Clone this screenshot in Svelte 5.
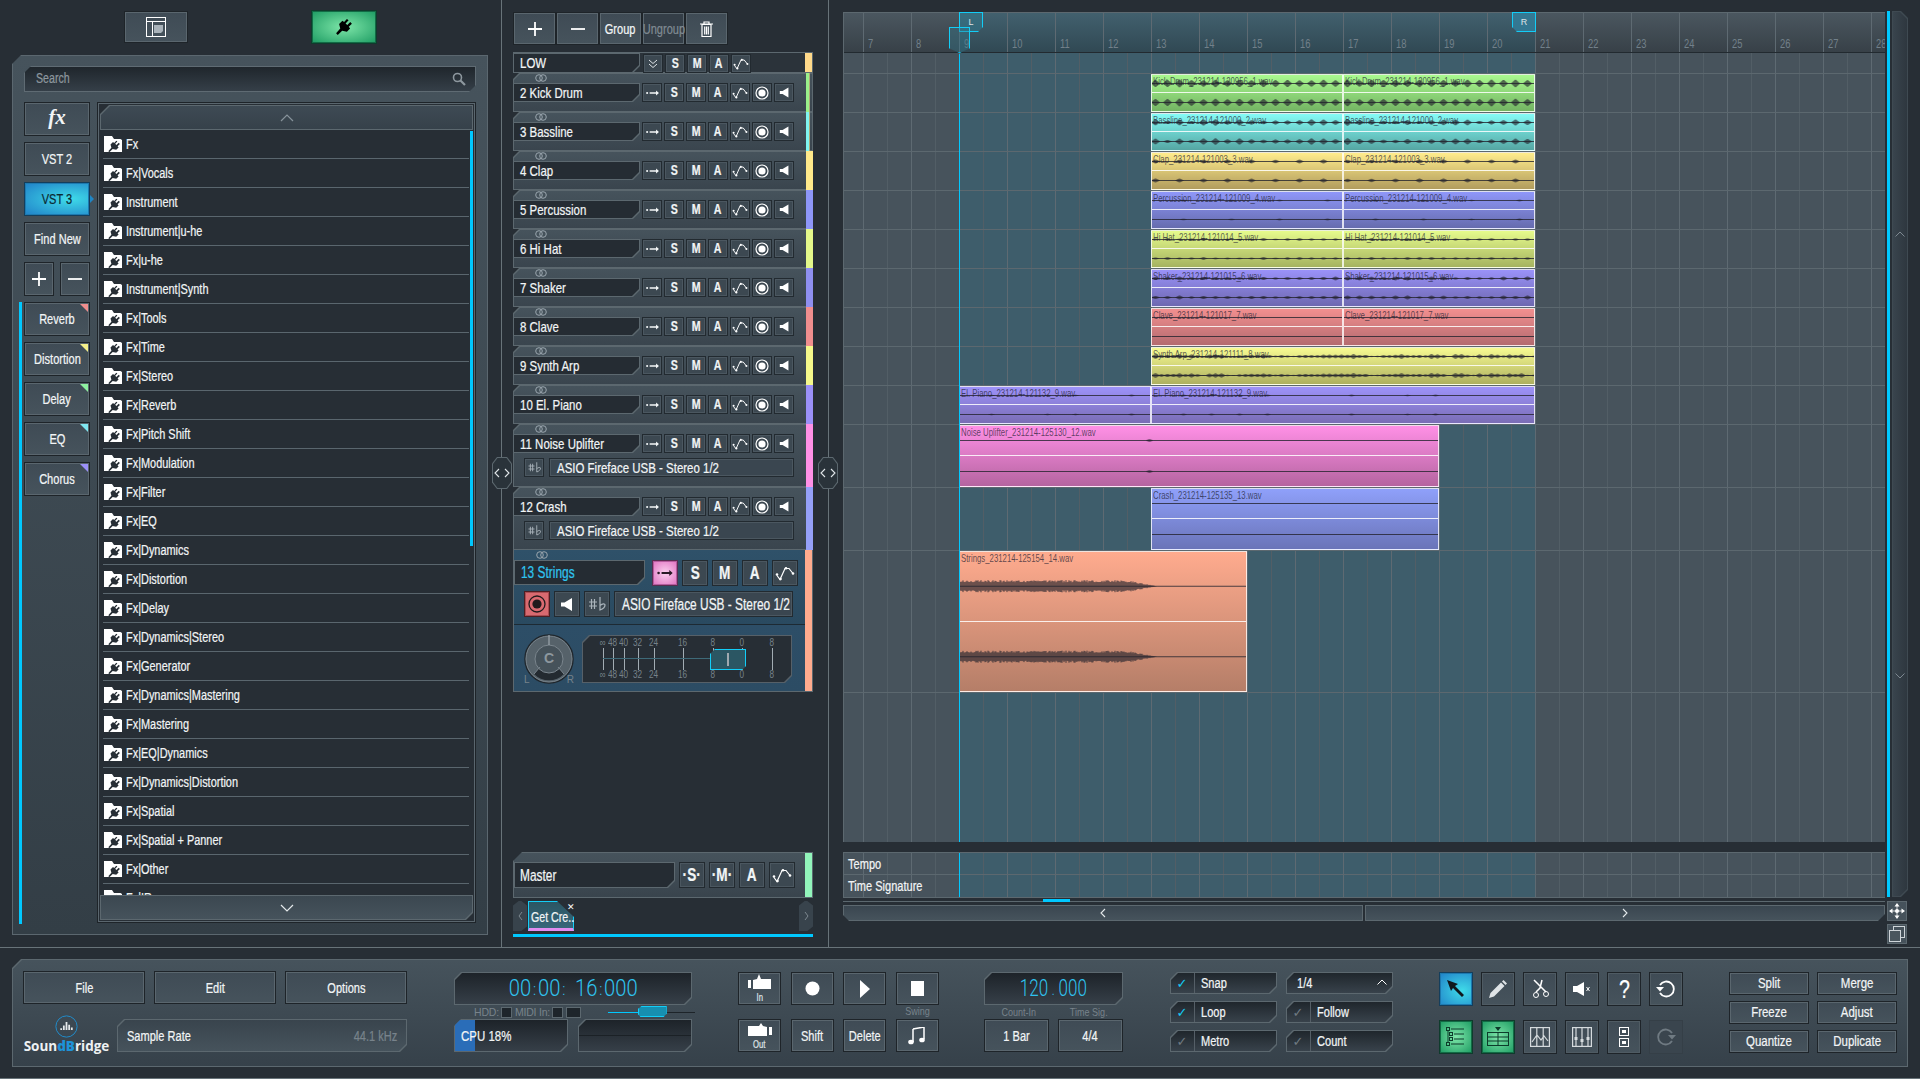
<script>
  const folders = ['Fx','Fx|Vocals','Instrument','Instrument|u-he','Fx|u-he','Instrument|Synth','Fx|Tools','Fx|Time','Fx|Stereo','Fx|Reverb','Fx|Pitch Shift','Fx|Modulation','Fx|Filter','Fx|EQ','Fx|Dynamics','Fx|Distortion','Fx|Delay','Fx|Dynamics|Stereo','Fx|Generator','Fx|Dynamics|Mastering','Fx|Mastering','Fx|EQ|Dynamics','Fx|Dynamics|Distortion','Fx|Spatial','Fx|Spatial + Panner','Fx|Other','Fx|IR'];
  const fxTabs = [['Reverb','#f08e8e'],['Distortion','#f5f08a'],['Delay','#8ef0a0'],['EQ','#7fe6f0'],['Chorus','#9b90f8']];
  const tracks = [
    {n:'2 Kick Drum',c:'#9af08a',g:1},{n:'3 Bassline',c:'#7ff5f0',g:1},{n:'4 Clap',c:'#ffe98a'},{n:'5 Percussion',c:'#8e96f8'},
    {n:'6 Hi Hat',c:'#e4f88a'},{n:'7 Shaker',c:'#8f8ff0'},{n:'8 Clave',c:'#f08e8e'},{n:'9 Synth Arp',c:'#f5f88a'},{n:'10 El. Piano',c:'#9b90f8'},
    {n:'11 Noise Uplifter',c:'#ff90e6',out:1},{n:'12 Crash',c:'#95a0f8',out:1}
  ];
  const barX = (b) => (b - 13) * 48 + 307;
  const bars = Array.from({length:22},(_,i)=>i+7);

  function rnd(seed){ let s = seed; return () => { s = (s * 16807) % 2147483647; return s / 2147483647; }; }
  function wave(w, h, spec, seed, lane){
    const r = rnd(seed * 97 + 13);
    const mid = lane === 0 ? h * 0.25 : h * 0.75;
    let d = `M0 ${mid}H${w}`;
    const {p, a, j, env, o = 4} = spec;
    if (env){
      for (let x=0;x<env;x+=1){
        const t = x/env; const am = a*(0.7+0.4*r())*(t>0.85?(1-t)*6.6:1);
        d += `M${x} ${(mid-am).toFixed(1)}V${(mid+am).toFixed(1)}`;
      }
      return d;
    }
    if (p){
      for (let x=o;x<w;x+=p){
        if (r() < (spec.skip||0)) continue;
        const base = a*(1-j*r());
        for (let i=-3;i<6;i++){
          const am = base*Math.max(0,1-Math.abs(i-0.5)/4.5);
          if (am<0.3) continue;
          d += `M${x+i} ${(mid-am).toFixed(1)}V${(mid+am).toFixed(1)}`;
        }
      }
    }
    return d;
  }
  const rows = [
    {h:39,clips:[['Kick Drum_231214-120956_1.wav',13,17,'#a9f98f','#73b463',{p:12,a:4.2,j:.2}],['Kick Drum_231214-120956_1.wav',17,21,'#a9f98f','#73b463',{p:12,a:4.2,j:.2}]]},
    {h:39,clips:[['Bassline_231214-121000_2.wav',13,17,'#84fbf6','#55a6a3',{p:12,a:3.6,j:.6}],['Bassline_231214-121000_2.wav',17,21,'#84fbf6','#55a6a3',{p:12,a:3.6,j:.6}]]},
    {h:39,clips:[['Clap_231214-121003_3.wav',13,17,'#ffec8c','#b19c5d',{p:24,a:2.200,j:.2}],['Clap_231214-121003_3.wav',17,21,'#ffec8c','#b19c5d',{p:24,a:2.200,j:.2}]]},
    {h:39,clips:[['Percussion_231214-121009_4.wav',13,17,'#8f97f9','#666cae',{p:48,a:1,j:.2,o:32}],['Percussion_231214-121009_4.wav',17,21,'#8f97f9','#666cae',{p:48,a:1,j:.2,o:32}]]},
    {h:39,clips:[['Hi Hat_231214-121014_5.wav',13,17,'#e6fb8c','#a5b360',{p:12,a:1.500,j:.5}],['Hi Hat_231214-121014_5.wav',17,21,'#e6fb8c','#a5b360',{p:12,a:1.500,j:.5}]]},
    {h:39,clips:[['Shaker_231214-121015_6.wav',13,17,'#9a92f9','#6e68b0',{p:12,a:2.200,j:.5}],['Shaker_231214-121015_6.wav',17,21,'#9a92f9','#6e68b0',{p:12,a:2.200,j:.5}]]},
    {h:39,clips:[['Clave_231214-121017_7.wav',13,17,'#f28f8f','#b46b70',{}],['Clave_231214-121017_7.wav',17,21,'#f28f8f','#b46b70',{}]]},
    {h:39,clips:[['Synth Arp_231214-121111_8.wav',13,21,'#f7fb92','#aeb060',{p:6,a:2.600,j:.8}]]},
    {h:39,clips:[['El. Piano_231214-121132_9.wav',9,13,'#9d92fa','#7a6db5',{p:28,a:1,j:.3,skip:.4}],['El. Piano_231214-121132_9.wav',13,21,'#9d92fa','#7a6db5',{p:28,a:1,j:.3,skip:.4}]]},
    {h:63,clips:[['Noise Uplifter_231214-125130_12.wav',9,19,'#ff90e6','#b564a0',{p:999,a:1.300,j:0,o:190}]]},
    {h:63,clips:[['Crash_231214-125135_13.wav',13,19,'#8fa0fa','#6a74b8',{}]]},
    {h:142,clips:[['Strings_231214-125154_14.wav',9,15,'#ffab8e','#b57e68',{env:198,a:5.500}]]}
  ];
  const meterLabels = [['∞',604],['48',614],['40',625],['32',639],['24',655],['16',684],['8',714],['0',743],['8',773]];
</script>

<svg width="0" height="0" class="defs">
  <symbol id="plug" viewBox="0 0 24 24"><path d="M15.500 2.500l-3.400 3.600-2-1.600-4 4 1.400 5.400-5 5.600 2 2 5.300-5.100 5.700 1.200 3.800-3.900-1.600-1.900 3.800-3.800-2-1.900-3.600 3.600-2-2 3.600-3.700z"/></symbol>
  <symbol id="folder" viewBox="0 0 18 16"><path d="M0 0h8l2 3h6.500l1.500 1v12H0z" fill="#fff"/><path d="M12.300 4.800l-2.100 2.200-1.200-1-2.500 2.500 .9 3.300-3.100 3.400 1.200.9 3.200-3.100 3.500.8 2.400-2.400-1-1.200 2.300-2.300-1.200-1.200-2.300 2.300-1.200-1.200 2.200-2.300z" fill="#272e35"/></symbol>
  <symbol id="route" viewBox="0 0 20 14"><circle cx="2.500" cy="7" r="1.500" fill="currentColor"/><path d="M6 5.800h9V3.500l4 3.500-4 3.500V8.200H6z" fill="currentColor"/></symbol>
  <symbol id="auto" viewBox="0 0 20 14"><path d="M2 9l3 4 5-11 4 0 4 5" fill="none" stroke="#fff" stroke-width="1.200"/><circle cx="2" cy="8" r="1.300" fill="#fff"/><circle cx="5.500" cy="12.500" r="1.300" fill="#fff"/><circle cx="11" cy="1.800" r="1.300" fill="#fff"/><circle cx="18" cy="7" r="1.300" fill="#fff"/></symbol>
  <symbol id="spk" viewBox="0 0 14 14"><path d="M1 5h3.500L12 .5v13L4.500 9H1z" fill="#fff"/></symbol>
  <symbol id="link" viewBox="0 0 12 8"><circle cx="4" cy="4" r="3.300" fill="none" stroke="#9aa6ae"/><circle cx="8" cy="4" r="3.300" fill="none" stroke="#9aa6ae"/></symbol>
  <symbol id="sharp" viewBox="0 0 20 16"><path d="M2 6h8M2 10h8M4.500 3v10M7.500 3v10M13 1v13c3-1 5-3 5-5 0-1.500-2.500-1.500-5 .5" fill="none" stroke="#aab4bb" stroke-width="1.200"/></symbol>
</svg>

{#snippet ic(id, w, h)}
  <svg width={w} height={h} class="icn"><use href={"#"+id}/></svg>
{/snippet}

{#snippet rec()}
  <svg width="14" height="14" viewBox="0 0 14 14"><circle cx="7" cy="7" r="6" fill="none" stroke="#fff" stroke-width="1.200"/><circle cx="7" cy="7" r="3.600" fill="#fff"/></svg>
{/snippet}

{#snippet plus()}
  <svg width="14" height="14" viewBox="0 0 14 14"><path d="M0 7h14M7 0v14" stroke="#fff" stroke-width="1.800"/></svg>
{/snippet}
{#snippet minus()}
  <svg width="14" height="14" viewBox="0 0 14 14"><path d="M0 7h14" stroke="#fff" stroke-width="1.800"/></svg>
{/snippet}

<div class="app">
  <div class="top">
    <section class="browser">
      <div class="toptools">
        <button class="btn btop">
          <svg width="20" height="20" viewBox="0 0 20 20"><rect x=".5" y=".5" width="19" height="19" fill="none" stroke="#fff"/><path d="M.5 4.500h19M6.500 4.500v15" stroke="#fff" fill="none"/><path d="M8 8h9v6l-2 2H8z" fill="#aab3ba"/></svg>
        </button>
        <button class="btn bplug green">
          <svg width="20" height="20" class="plugi"><use href="#plug"/></svg>
        </button>
      </div>
      <div class="panel">
        <div class="search"><span class="o ol">Search</span>
          <svg width="14" height="14" viewBox="0 0 14 14"><circle cx="5.500" cy="5.500" r="4" fill="none" stroke="#8d979e" stroke-width="1.600"/><path d="M8.500 8.500l4.500 4.500" stroke="#8d979e" stroke-width="2.200"/></svg>
        </div>
        <div class="pbody">
          <div class="pleft">
            <button class="btn lb fxb">fx</button>
            <button class="btn lb"><span class="o">VST 2</span></button>
            <button class="btn lb blue"><span class="o">VST 3</span><i class="tip"></i></button>
            <button class="btn lb"><span class="o">Find New</span></button>
            <div class="pm">
              <button class="btn lb">{@render plus()}</button>
              <button class="btn lb">{@render minus()}</button>
            </div>
            <div class="fxtabs">
              {#each fxTabs as t}
                <button class="btn lb"><span class="o">{t[0]}</span><i class="tri" style="border-top-color:{t[1]}"></i></button>
              {/each}
            </div>
          </div>
          <div class="list">
            <div class="lhead cut-tl"><svg width="14" height="8" viewBox="0 0 14 8"><path d="M1 7l6-6 6 6" fill="none" stroke="#86929a" stroke-width="1.200"/></svg></div>
            <div class="lrows">
              {#each folders as f}
                <div class="lrow">{@render ic('folder',18,16)}<span class="o ol lt">{f}</span></div>
              {/each}
              <i class="lscroll"></i>
            </div>
            <div class="lfoot cut-br"><svg width="14" height="8" viewBox="0 0 14 8"><path d="M1 1l6 6 6-6" fill="none" stroke="#e3e8ea" stroke-width="1.200"/></svg></div>
          </div>
        </div>
      </div>
    </section>

    <section class="tracks">
      <div class="hnd hl"><svg width="16" height="10" viewBox="0 0 16 10"><path d="M5 1L1 5l4 4M11 1l4 4-4 4" fill="none" stroke="#dfe4e7" stroke-width="1.100"/></svg></div>
      <div class="hnd hm"><svg width="16" height="10" viewBox="0 0 16 10"><path d="M5 1L1 5l4 4M11 1l4 4-4 4" fill="none" stroke="#dfe4e7" stroke-width="1.100"/></svg></div>
      <div class="tbar">
        <button class="btn tb">{@render plus()}</button>
        <button class="btn tb">{@render minus()}</button>
        <button class="btn tb tx"><span class="o">Group</span></button>
        <button class="btn tb tx dim"><span class="o">Ungroup</span></button>
        <button class="btn tb"><svg width="13" height="16" viewBox="0 0 13 16"><path d="M0 3h13M4 3V1h5v2M2 3.500h9V15.500H2zM4.700 5.500v8M6.500 5.500v8M8.300 5.500v8" fill="none" stroke="#fff" stroke-width="1.200"/></svg></button>
      </div>
      <div class="tlist">
        <div class="group">
          <div class="name cut-br"><span class="o ol">LOW</span></div>
          <div class="tbtns lowb">
            <button class="sq"><svg width="10" height="10" viewBox="0 0 10 10"><path d="M1 1l4 3.500L9 1M1 5l4 3.500L9 5" fill="none" stroke="#dfe4e7"/></svg></button>
            {#each ['S','M','A'] as L}<button class="sq"><span class="o">{L}</span></button>{/each}
            <button class="sq">{@render ic('auto',16,12)}</button>
          </div>
          <i class="strip" style="background:#ffd98a"></i>
        </div>
        {#each tracks as t}
          <div class="track cut-tl2" class:tall={t.out}>
            <div class="lnk">{@render ic('link',12,8)}</div>
            <div class="tline">
              <div class="name cut-br"><span class="o ol">{t.n}</span></div>
              <div class="tbtns">
                <button class="sq">{@render ic('route',15,10)}</button>
                {#each ['S','M','A'] as L}<button class="sq"><span class="o">{L}</span></button>{/each}
                <button class="sq">{@render ic('auto',16,12)}</button>
                <button class="sq">{@render rec()}</button>
                <button class="sq">{@render ic('spk',11,11)}</button>
              </div>
            </div>
            {#if t.out}
              <div class="outl">
                <button class="sq">{@render ic('sharp',15,13)}</button>
                <div class="out"><span class="o ol">ASIO Fireface USB - Stereo 1/2</span></div>
              </div>
            {/if}
            <i class="strip" class:gs={t.g} style="background:{t.c}"></i>
            {#if t.g}<i class="gedge"></i>{/if}
          </div>
        {/each}
        <div class="strings">
          <div class="sup">
            <div class="lnk">{@render ic('link',12,8)}</div>
            <div class="sline1">
              <div class="name sname cut-br"><span class="o ol">13 Strings</span></div>
              <button class="bsq pink">{@render ic('route',18,12)}</button>
              {#each ['S','M','A'] as L}<button class="bsq"><span class="o">{L}</span></button>{/each}
              <button class="bsq">{@render ic('auto',20,15)}</button>
            </div>
            <div class="sline2">
              <button class="bsq red"><svg width="18" height="18" viewBox="0 0 18 18"><circle cx="9" cy="9" r="8" fill="none" stroke="#201a1c" stroke-width="1.300"/><circle cx="9" cy="9" r="4.600" fill="#201a1c"/></svg></button>
              <button class="bsq">{@render ic('spk',14,15)}</button>
              <button class="bsq">{@render ic('sharp',20,16)}</button>
              <div class="out big"><span class="o ol">ASIO Fireface USB - Stereo 1/2</span></div>
            </div>
          </div>
          <div class="slow">
            <div class="knob">
              <svg width="50" height="50" viewBox="0 0 50 50">
                <circle cx="25" cy="25" r="24" fill="#56626a" stroke="#1f262c" stroke-width="1.500"/>
                <circle cx="25" cy="25" r="23" fill="none" stroke="#77828a" stroke-width="1"/>
                <path d="M10 40a21 21 0 0 0 30 0l-6-7a12 12 0 0 1-18 0z" fill="#232a30"/>
                <circle cx="25" cy="25" r="14" fill="#46525a" stroke="#7a858d"/>
                <path d="M25 1v10" stroke="#aab3ba"/>
                <path d="M10 40l6-7M40 40l-6-7" stroke="#7a858d"/>
              </svg>
              <span class="kc">C</span><span class="kl">L</span><span class="kr">R</span>
            </div>
            <div class="meter cut-tlbr">
              {#each meterLabels as m}
                <div class="tick" style="left:{m[1]-583}px"><span class="ml">{m[0]}</span><i></i><span class="ml">{m[0]}</span></div>
              {/each}
              <i class="mline"></i>
              <div class="thumb"><i></i></div>
            </div>
          </div>
          <i class="strip" style="background:#ffab8e"></i>
        </div>
      </div>

      <div class="mfoot">
        <div class="master">
          <div class="name mname cut-br"><span class="o ol">Master</span></div>
          <div class="mbtns">
            <button class="bsq"><span class="o">·S·</span></button><button class="bsq"><span class="o">·M·</span></button><button class="bsq"><span class="o">A</span></button>
            <button class="bsq">{@render ic('auto',20,15)}</button>
          </div>
          <i class="strip" style="background:#92f5bb"></i>
        </div>
        <div class="tabs">
          <div class="tnav"><svg width="5" height="8" viewBox="0 0 5 8"><path d="M4 0L1 4l3 4" fill="none" stroke="#7d8890"/></svg></div>
          <div class="doc"><span class="o ol">Get Cre...</span></div>
          <i class="x">✕</i>
          <div class="tnav r"><svg width="5" height="8" viewBox="0 0 5 8"><path d="M1 0l3 4-3 4" fill="none" stroke="#7d8890"/></svg></div>
        </div>
        <div class="cyanline"></div>
      </div>
    </section>

    <section class="arr">
      <div class="arrmain">
        <div class="canvas">
          <div class="ruler">
            {#each bars as b}<div class="bar"><span>{b}</span></div>{/each}
          </div>
          <div class="subruler"></div>
          {#each rows as r, ri}
            <div class="row" style="height:{r.h}px">
              {#each r.clips as c, ci}
                {@const w = (c[2]-c[1])*48}
                {@const h = r.h - 1}
                <div class="clip" style="left:{barX(c[1])}px;width:{w}px;background:linear-gradient({c[3]},{c[4]})">
                  <span class="ctitle">{c[0]}</span>
                  <svg width={w} height={h} viewBox="0 0 {w} {h}">
                    <path d={wave(w,h,c[5],ri*5+ci+1,0)} stroke="rgba(35,35,45,.8)" stroke-width="1" fill="none"/>
                    <path d={wave(w,h,c[5],ri*5+ci+1,1)} stroke="rgba(35,35,45,.8)" stroke-width="1" fill="none"/>
                  </svg>
                  <i class="cmid"></i>
                </div>
              {/each}
            </div>
          {/each}
          <i class="cycle"></i>
          <div class="lmark">L</div>
          <div class="cue"></div>
          <div class="rmark">R</div>
        </div>
        <div class="tempo">
          <div class="trow"><span class="o ol">Tempo</span></div>
          <div class="trow"><span class="o ol">Time Signature</span></div>
          <i class="cycle"></i>
        </div>
        <div class="hscroll"><i></i></div>
        <div class="hbtns">
          <div class="hb"><svg width="6" height="10" viewBox="0 0 6 10"><path d="M5 1L1 5l4 4" fill="none" stroke="#e3e8ea" stroke-width="1.100"/></svg></div>
          <div class="hb cut-br"><svg width="6" height="10" viewBox="0 0 6 10"><path d="M1 1l4 4-4 4" fill="none" stroke="#e3e8ea" stroke-width="1.100"/></svg></div>
        </div>
      </div>
      <div class="arrside">
        <div class="vs">
          <i class="vcy"></i>
          <div class="vstrip cut-trbr">
            <svg width="10" height="6" viewBox="0 0 10 6"><path d="M.5 5.500L5 1l4.500 4.500" fill="none" stroke="#7d8890"/></svg>
            <svg width="10" height="6" viewBox="0 0 10 6"><path d="M.5 .5L5 5l4.500-4.500" fill="none" stroke="#7d8890"/></svg>
          </div>
        </div>
        <button class="cbtn"><svg width="16" height="16" viewBox="0 0 16 16"><path d="M8 0l2.500 3.500h-5zM8 16l2.500-3.500h-5zM0 8l3.500-2.500v5zM16 8l-3.500-2.500v5z" fill="#fff"/><path d="M8 3v10M3 8h10" stroke="#fff" stroke-width=".8"/><circle cx="8" cy="8" r="2" fill="#fff"/></svg></button>
        <button class="cbtn"><svg width="16" height="16" viewBox="0 0 16 16"><rect x="4.500" y=".5" width="11" height="11" fill="none" stroke="#cfd5d9"/><rect x=".5" y="4.500" width="11" height="11" fill="#4a565e" stroke="#cfd5d9"/></svg></button>
      </div>
    </section>
  </div>

  <footer class="foot">
    <div class="bar-panel cut-tl">
      <div class="g-file">
        <div class="fr1"><button class="btn"><span class="o">File</span></button><button class="btn"><span class="o">Edit</span></button><button class="btn"><span class="o">Options</span></button></div>
        <div class="fr2">
          <div class="logo">
            <svg width="25" height="25" viewBox="0 0 26 26"><circle cx="13" cy="13" r="12" fill="none" stroke="#1d93d8" stroke-width="1"/><path d="M6 17h2v-2H6zM9 17h2v-5H9zM12 17h2V8h-2zM15 17h2v-6h-2zM18 17h2v-3h-2z" fill="#e6eaec"/></svg>
            <div class="lname">Soun<b>dB</b>ridge</div>
          </div>
          <div class="srate cut-tlbr"><span class="o ol">Sample Rate</span><em class="o oe">44.1 kHz</em></div>
        </div>
      </div>
      <div class="g-time">
        <div class="lcd cut-tlbr"><div class="dg"><span>00</span><u>:</u><span>00</span><u>:</u><span class="sp">16</span><u>:</u><span>000</span></div></div>
        <div class="st">
          <div class="hdd"><em>HDD:</em><i class="led"></i><em>MIDI In:</em><i class="led"></i><i class="led keys"></i></div>
          <div class="vol"><i class="voll"></i><i class="volt"></i></div>
        </div>
        <div class="cpurow">
          <div class="cpu cut-tlbr"><i></i><span class="o ol">CPU 18%</span></div>
          <div class="spare cut-tlbr"><i></i></div>
        </div>
      </div>
      <div class="g-trans">
        <button class="btn tr"><svg width="24" height="20" viewBox="0 0 24 20"><path d="M0 6h3v8H0zM5 6l4-1 2-5 2 5h10v10H5z" fill="#fff"/></svg><small class="o">In</small></button>
        <button class="btn tr"><svg width="15" height="15"><circle cx="7.500" cy="7.500" r="7" fill="#fff"/></svg></button>
        <button class="btn tr"><svg width="12" height="18" viewBox="0 0 12 18"><path d="M1 0l10 9L1 18z" fill="#fff"/></svg></button>
        <button class="btn tr"><svg width="13" height="15"><rect width="13" height="15" fill="#fff"/></svg></button>
        <button class="btn tr"><svg width="24" height="20" viewBox="0 0 24 20"><path d="M24 6h-3v8h3zM19 6l-4-1-2-3-2 3H0v10h19z" fill="#fff"/></svg><small class="o">Out</small></button>
        <button class="btn tr"><span class="o">Shift</span></button>
        <button class="btn tr"><span class="o">Delete</span></button>
        <div class="lblw"><label>Swing</label><button class="btn tr"><svg width="18" height="18" viewBox="0 0 18 18"><path d="M5 2l11-2v12M5 2v13" fill="none" stroke="#fff" stroke-width="1.500"/><ellipse cx="3" cy="15" rx="2.800" ry="2.300" fill="#fff"/><ellipse cx="14" cy="13" rx="2.800" ry="2.300" fill="#fff"/></svg></button></div>
      </div>
      <div class="g-tempo">
        <div class="lcd tl cut-tlbr"><div class="dg"><span>120</span><u>.</u><span>000</span></div></div>
        <div class="lbls"><label>Count-In</label><label>Time Sig.</label></div>
        <div class="two"><button class="btn"><span class="o">1 Bar</span></button><button class="btn"><span class="o">4/4</span></button></div>
      </div>
      <div class="g-chk">
        <div class="ck on cut-tlbr"><i>✓</i><span class="o ol">Snap</span></div>
        <div class="ck dd cut-tlbr"><span class="o ol">1/4</span><svg width="10" height="6" viewBox="0 0 10 6"><path d="M.5 5.500L5 1l4.500 4.500" fill="none" stroke="#fff"/></svg></div>
        <div class="ck on cut-tlbr"><i>✓</i><span class="o ol">Loop</span></div>
        <div class="ck cut-tlbr"><i>✓</i><span class="o ol">Follow</span></div>
        <div class="ck cut-tlbr"><i>✓</i><span class="o ol">Metro</span></div>
        <div class="ck cut-tlbr"><i>✓</i><span class="o ol">Count</span></div>
      </div>
      <div class="g-tools">
        <button class="tool blue"><svg width="20" height="20" viewBox="0 0 20 20"><path d="M1 1l11 4-3 2 9 9-2 2-9-9-2 3z" fill="#10171c"/></svg></button>
        <button class="tool"><svg width="18" height="18" viewBox="0 0 18 18"><path d="M0 18l1.500-5L12 2.500 15.500 6 5 16.500z" fill="#dfe3e6"/><path d="M13 1.500l1.500-1.500L18 3.500 16.500 5z" fill="#dfe3e6"/></svg></button>
        <button class="tool"><svg width="20" height="20" viewBox="0 0 20 20"><path d="M4 1l12 12M12 1l-2 8-4 4" fill="none" stroke="#fff" stroke-width="1.500"/><circle cx="6" cy="16" r="2.500" fill="none" stroke="#fff"/><circle cx="16" cy="15" r="2.500" fill="none" stroke="#fff"/></svg></button>
        <button class="tool"><svg width="18" height="14" viewBox="0 0 18 14"><path d="M0 4h4l7-4v14L4 10H0z" fill="#fff"/><path d="M13.500 5l3 4M16.500 5l-3 4" stroke="#fff"/></svg></button>
        <button class="tool q"><span class="o">?</span></button>
        <button class="tool"><svg width="20" height="20" viewBox="0 0 20 20"><path d="M4 6a7.500 7.500 0 1 1 0 8" fill="none" stroke="#fff" stroke-width="1.800"/><path d="M0 9h8L4 13.500z" fill="#fff" transform="translate(0 -1)"/></svg></button>
        <button class="tool green"><svg width="20" height="20" viewBox="0 0 20 20"><g fill="none" stroke="#0d3b2a"><rect x=".5" y=".5" width="3" height="3"/><rect x="3.500" y="5.500" width="3" height="3"/><rect x="3.500" y="10.500" width="3" height="3"/><rect x=".5" y="15.500" width="3" height="3"/><path d="M5 2h13M8 7h10M8 12h10M5 17h13M2 4v11"/></g></svg></button>
        <button class="tool green"><svg width="22" height="20" viewBox="0 0 22 20"><g fill="none" stroke="#0d3b2a"><rect x=".5" y="5.500" width="21" height="13"/><path d="M.5 10h21M.5 14h21M11 5v14"/></g><path d="M8 0h6l-3 4z" fill="#0d3b2a"/></svg></button>
        <button class="tool"><svg width="20" height="20" viewBox="0 0 20 20"><g fill="none" stroke="#d6dbde" stroke-width="1.200"><rect x=".6" y=".6" width="18.800" height="18.800"/><path d="M6.800 1v18M13.200 1v18M2 15l5-7 4 5 3-4 4 5"/></g></svg></button>
        <button class="tool"><svg width="20" height="20" viewBox="0 0 20 20"><g fill="none" stroke="#d6dbde" stroke-width="1.200"><rect x=".6" y=".6" width="18.800" height="18.800"/><path d="M4 1v18M10 1v18M16 1v18"/></g><path d="M2.500 10h3v3h-3zM8.500 12h3v3h-3zM14.500 10h3v3h-3z" fill="#d6dbde"/></svg></button>
        <button class="tool"><svg width="12" height="20" viewBox="0 0 12 20"><g fill="none" stroke="#fff"><rect x="1.500" y=".5" width="9" height="8"/><rect x="1.500" y="11.500" width="9" height="8"/></g><rect x="4" y="3" width="4" height="3" fill="#fff"/><rect x="4" y="14" width="4" height="3" fill="#fff"/></svg></button>
        <button class="tool off"><svg width="20" height="20" viewBox="0 0 20 20"><path d="M16 6a7.500 7.500 0 1 0 0 8" fill="none" stroke="#6f7a82" stroke-width="1.800"/><path d="M20 9h-8l4 4.500z" fill="#6f7a82" transform="translate(0 -1)"/></svg></button>
      </div>
      <div class="g-edit">
        {#each ['Split','Merge','Freeze','Adjust','Quantize','Duplicate'] as e}
          <button class="btn"><span class="o">{e}</span></button>
        {/each}
      </div>
    </div>
  </footer>
</div>

<style>
  :global(body){margin:0;background:#272e35;}
  *{box-sizing:border-box;}
  .defs{position:absolute;}
  button{font:inherit;color:inherit;padding:0;cursor:default;}
  i{display:block;font-style:normal;}
  .app{width:1920px;height:1079px;overflow:hidden;background:#272e35;color:#f2f5f6;
    font-family:"Liberation Sans Narrow","Liberation Sans",sans-serif;font-size:13px;display:flex;flex-direction:column;}
  .top{height:948px;display:flex;border-bottom:1px solid #687379;flex:none;}

  .o{display:inline-block;white-space:nowrap;transform:scale(.85,1.12);-webkit-text-stroke:.2px currentColor;}
  .ol{transform-origin:0 50%;}
  .oe{transform-origin:100% 50%;}
  .lt{transform:scale(.81,1.1);}

  .btn{display:flex;align-items:center;justify-content:center;background:linear-gradient(#3f4b55,#46535c);border:1px solid #1e2429;box-shadow:inset 0 0 0 1px #5a666e;color:#f2f5f6;position:relative;}

  .cut-tl,.cut-br,.cut-tlbr,.cut-trbr,.cut-tl2{position:relative;isolation:isolate;background:var(--bd,#5c686f);}
  .cut-tl::before,.cut-br::before,.cut-tlbr::before,.cut-trbr::before,.cut-tl2::before{content:'';position:absolute;inset:1px;background:var(--fill);z-index:-1;clip-path:inherit;}
  .cut-tl{clip-path:polygon(9px 0,100% 0,100% 100%,0 100%,0 9px);}
  .cut-br{clip-path:polygon(0 0,100% 0,100% calc(100% - 7px),calc(100% - 7px) 100%,0 100%);}
  .cut-tlbr{clip-path:polygon(7px 0,100% 0,100% calc(100% - 7px),calc(100% - 7px) 100%,0 100%,0 7px);}
  .cut-trbr{clip-path:polygon(0 0,calc(100% - 7px) 0,100% 7px,100% calc(100% - 7px),calc(100% - 7px) 100%,0 100%);}
  .cut-tl2{clip-path:polygon(6px 0,100% 0,100% 100%,0 100%,0 6px);}

  .browser{width:501px;flex:none;padding:0 0 0 12px;}
  .toptools{height:55px;display:flex;align-items:center;padding-left:112px;}
  .btop{width:64px;height:32px;margin-top:-1px;}
  .bplug{width:66px;height:34px;margin-left:123px;margin-top:-1px;}
  .green{background:radial-gradient(ellipse at center,#7ee6a9,#1c9b62);border-color:#0f3b2c;box-shadow:inset 0 0 0 1px #126a45;}
  .plugi{fill:#000;}
  .panel{width:476px;height:880px;background:linear-gradient(#46535c,#333e46);border:1px solid #5b676f;clip-path:polygon(9px 0,100% 0,100% 100%,0 100%,0 9px);padding:10px 11px;}
  .search{height:26px;background:linear-gradient(#1f262c,#353f48);border:1px solid #5f6b73;clip-path:polygon(7px 0,100% 0,100% calc(100% - 7px),calc(100% - 7px) 100%,0 100%,0 7px);display:flex;align-items:center;justify-content:space-between;padding:0 9px 1px 11px;color:#8d979e;font-size:12.500px;}
  .pbody{display:flex;margin-top:10px;gap:7px;}
  .pleft{width:66px;flex:none;display:flex;flex-direction:column;gap:6px;}
  .lb{height:34px;width:66px;font-size:13px;padding-bottom:2px;}
  .fxb{font-family:"Liberation Serif",serif;font-style:italic;font-weight:700;font-size:21px;padding-bottom:3px;}
  .blue{background:radial-gradient(ellipse at 70% 50%,#3fdbe9,#2080c8);border-color:#143e5c;box-shadow:inset 0 0 0 1px #1d7ab0;color:#0c2a33;}
  .tip{position:absolute;right:-5px;top:12px;border-left:4px solid #1f86c6;border-top:4px solid transparent;border-bottom:4px solid transparent;}
  .pm{display:flex;gap:6px;}
  .pm .lb{width:30px;padding-bottom:0;}
  .fxtabs{display:flex;flex-direction:column;gap:6px;margin-left:-5px;padding-left:2px;border-left:3px solid #00c8ff;height:622px;width:71px;}
  .tri{position:absolute;right:1px;top:1px;border-top:8px solid;border-left:8px solid transparent;}
  .list{width:380px;height:821px;background:#272e35;border:1px solid #1e2429;box-shadow:inset 0 0 0 1px #5a666e;display:flex;flex-direction:column;padding:2px;}
  .lhead,.lfoot{--fill:linear-gradient(#3e4a54,#36414a);flex:none;height:25px;display:flex;align-items:center;justify-content:center;}
  .lfoot{--fill:linear-gradient(#3b4750,#46535c);}
  .lrows{flex:1;overflow:hidden;position:relative;padding-left:3px;}
  .lrow{height:29px;width:366px;border-bottom:1px solid #5a666e;display:flex;align-items:center;gap:4px;padding:0 0 0 1px;font-size:13.500px;}
  .lscroll{position:absolute;right:0;top:1px;width:3px;height:415px;background:#00c8ff;}
  .icn{flex:none;}

  .tracks{width:328px;flex:none;border-left:1px solid #687379;border-right:1px solid #687379;padding:12px 15px 10px 11px;display:flex;flex-direction:column;position:relative;}
  .hnd{position:absolute;top:457px;height:32px;width:20px;background:#5c686f;isolation:isolate;display:flex;align-items:center;justify-content:center;z-index:2;clip-path:polygon(25% 0,75% 0,100% 20%,100% 80%,75% 100%,25% 100%,0 80%,0 20%);}
  .hnd::before{content:'';position:absolute;inset:1px;background:#2a333a;z-index:-1;clip-path:inherit;}
  .hl{left:-10px;}
  .hm{right:-10px;}
  .tbar{display:flex;height:33px;flex:none;}
  .tb{width:43px;height:33px;}
  .tx{font-size:13px;}
  .dim{color:#808b93;background:#343e47;}
  .tlist{margin-top:7px;width:300px;}
  .group,.track,.strings{position:relative;}
  .strip{position:absolute;right:0;top:0;bottom:0;width:7px;}
  .strip.gs{right:4px;width:3px;}
  .gedge{position:absolute;right:3px;top:0;bottom:0;width:1px;background:#b0a878;}
  .group{height:21px;display:flex;background:#2b333a;border-bottom:1px solid #5c686f;border-top:1px solid #5c686f;border-right:1px solid #5c686f;}
  .name{--fill:#252c33;width:127px;flex:none;height:19px;display:flex;align-items:center;padding:0 0 1px 7px;font-size:13.500px;}
  .group .name{height:20px;}
  .tbtns{display:flex;gap:2px;margin-left:2px;}
  .lowb{margin-top:1px;margin-left:3px;}
  .sq{width:20px;height:19px;background:#3c4851;border:1px solid #222a30;box-shadow:inset 0 0 0 1px #4b5760;display:flex;align-items:center;justify-content:center;font-weight:700;font-size:12.500px;color:#f2f5f6;}
  .track{--fill:linear-gradient(#46535c,#3a454e);height:39px;padding-top:10px;}
  .track.tall{height:63px;padding-top:10px;}
  .lnk{position:absolute;left:22px;top:1px;line-height:0;}
  .tline{display:flex;}
  .outl{display:flex;margin:5px 0 0 11px;gap:5px;}
  .out{height:19px;width:245px;background:#3a4650;border:1px solid #222a30;box-shadow:inset 0 0 0 1px #4b5760;display:flex;align-items:center;padding-left:7px;font-size:13.500px;}
  .strings{--fill:#2d4e67;height:142px;background:#2d4e67;border-bottom:1px solid #5c686f;border-left:1px solid #5c686f;border-right:1px solid #5c686f;}
  .sup{height:75px;background:linear-gradient(#2f5169,#2a4a60);border-bottom:1px solid #1d2a33;padding-top:10px;position:relative;}
  .sline1,.sline2{display:flex;gap:4px;}
  .sline2{margin:5px 0 0 10px;}
  .sname{--fill:#252c33;width:131px;height:25px;color:#2fc3ef;font-size:14px;}
  .bsq{width:26px;height:26px;background:#3c4851;border:1px solid #222a30;box-shadow:inset 0 0 0 1px #4b5760;display:flex;align-items:center;justify-content:center;font-weight:700;font-size:16px;color:#f2f5f6;flex:none;}
  .pink{background:radial-gradient(#fbd0ef,#e070c0);border-color:#5a2c50;box-shadow:inset 0 0 0 1px #b55c9e;margin:0 0 0 3px;color:#2a1a26;}
  .red{background:#d96a70;border-color:#4e1e22;box-shadow:inset 0 0 0 1px #a94c52;}
  .big{width:179px;height:26px;font-size:14px;}
  .slow{display:flex;gap:8px;padding:10px 0 0 10px;background:linear-gradient(#2d4e67,#2c4c64);height:66px;}
  .knob{width:50px;height:50px;position:relative;flex:none;margin-top:-1px;}
  .kc{position:absolute;left:0;right:0;top:16px;text-align:center;color:#8d979e;font-weight:700;font-size:14px;}
  .kl,.kr{position:absolute;bottom:-1px;font-size:10px;color:#76828a;}
  .kl{left:0;}.kr{right:0;}
  .meter{--fill:#272e35;--bd:#566068;width:210px;height:48px;position:relative;}
  .tick{position:absolute;top:3px;bottom:3px;width:20px;margin-left:-10px;display:flex;flex-direction:column;align-items:center;font-size:10px;line-height:10px;color:#76828a;}
  .ml{display:block;transform:scale(.82,1.05);}
  .tick i{flex:1;width:1px;background:#a2acb3;}
  .mline{position:absolute;left:21px;top:23px;width:130px;height:1px;background:#3e6a78;}
  .thumb{position:absolute;left:128px;top:14px;width:36px;height:21px;background:#2b5663;border:1px solid #13cdf7;clip-path:polygon(5px 0,100% 0,100% calc(100% - 4px),calc(100% - 4px) 100%,0 100%,0 5px);display:flex;align-items:center;justify-content:center;}
  .thumb i{width:2px;height:13px;background:#9fa9b0;}

  .mfoot{margin-top:auto;width:300px;}
  .master{height:46px;width:300px;position:relative;background:linear-gradient(#46535c,#39444d);border:1px solid #5c686f;display:flex;padding-top:9px;clip-path:polygon(9px 0,100% 0,100% 100%,0 100%,0 9px);}
  .mname{width:161px;height:26px;padding-left:6px;font-size:14px;}
  .mbtns{display:flex;gap:4px;margin-left:4px;}
  .tabs{display:flex;justify-content:space-between;height:30px;margin-top:3px;position:relative;}
  .tnav{width:14px;height:30px;background:#38434c;clip-path:polygon(40% 0,60% 0,100% 15%,100% 85%,60% 100%,0 100%,0 15%);display:flex;align-items:center;justify-content:center;}
  .doc{position:absolute;left:15px;top:0;width:46px;height:30px;background:linear-gradient(#2b5663,#37667a);border:1px solid #13cdf7;border-bottom:3px solid #e08cf0;display:flex;align-items:center;padding:5px 0 0 2px;font-size:12.500px;clip-path:polygon(0 0,29px 0,100% 16px,100% 100%,0 100%);}
  .x{position:absolute;left:54px;top:1px;font-size:9px;color:#fff;font-family:"DejaVu Sans",sans-serif;}
  .cyanline{height:3px;background:#00c8ff;margin-top:3px;}

  .arr{flex:1;display:flex;padding:12px 12px 0 14px;}
  .arrmain{width:1042px;flex:none;}
  .canvas{height:830px;position:relative;border-top:1px solid #5c686f;border-left:1px solid #5c686f;
    background:
      linear-gradient(90deg,#5e6a72 1px,transparent 1px,transparent 24px,#525e66 24px,#525e66 25px,transparent 25px) 19px 0/48px 100%,
      linear-gradient(90deg,#47535c 115px,#3e5d6b 115px,#3e5d6b 691px,#47535c 691px);}
  .ruler{height:40px;display:flex;padding-left:19px;overflow:hidden;border-bottom:1px solid #222a30;position:relative;
    background:
      linear-gradient(rgba(255,255,255,.02),rgba(0,0,0,.22)),
      linear-gradient(90deg,#47535c 115px,#3e5d6b 115px,#3e5d6b 691px,#47535c 691px);}
  .bar{width:48px;flex:none;border-left:1px solid #5e6a72;padding:23px 0 0 4px;font-size:11px;line-height:14px;color:#72808a;}
  .bar span{display:inline-block;transform:scale(.85,1.2);transform-origin:0 50%;}
  .subruler{height:21px;border-bottom:1px solid #5c686f;}
  .row{position:relative;border-bottom:1px solid #5c686f;}
  .clip{position:absolute;top:0;bottom:0;border:1px solid rgba(255,255,255,.78);overflow:hidden;}
  .clip svg{position:absolute;left:-1px;top:-1px;display:block;}
  .cmid{position:absolute;left:0;right:0;top:calc(50% - 1px);height:1px;background:rgba(255,255,255,.85);}
  .ctitle{position:absolute;left:1px;top:0;font-size:9.500px;line-height:12px;color:rgba(30,30,50,.72);white-space:nowrap;z-index:1;transform:scale(.82,1.15);transform-origin:0 0;}
  .cycle{position:absolute;left:115px;top:41px;bottom:0;width:1px;background:#00c8ff;}
  .lmark{position:absolute;left:115px;top:-1px;width:24px;height:20px;background:rgba(50,120,140,.55);border:1px solid #13cdf7;clip-path:polygon(0 0,100% 0,100% calc(100% - 5px),calc(100% - 5px) 100%,0 100%);font-size:9px;color:#dfe4e7;text-align:center;line-height:18px;}
  .cue{position:absolute;left:105px;top:14px;width:21px;height:26px;background:rgba(50,120,140,.4);border:1px solid #13cdf7;clip-path:polygon(0 0,100% 0,100% 82%,50% 100%,0 82%);}
  .rmark{position:absolute;left:668px;top:-1px;width:24px;height:20px;background:rgba(50,130,160,.75);border:1px solid #13cdf7;clip-path:polygon(0 0,100% 0,100% 100%,5px 100%,0 calc(100% - 5px));font-size:9px;color:#dfe4e7;text-align:center;line-height:18px;}
  .tempo{height:46px;margin-top:10px;position:relative;border:1px solid #5c686f;border-right:0;
    background:
      linear-gradient(90deg,#5e6a72 1px,transparent 1px,transparent 24px,#525e66 24px,#525e66 25px,transparent 25px) 19px 0/48px 100%,
      linear-gradient(90deg,#47535c 115px,#3e5d6b 115px,#3e5d6b 692px,#47535c 692px);}
  .tempo .cycle{top:0;}
  .trow{height:22px;padding:0 0 1px 4px;display:flex;align-items:center;font-size:13px;border-bottom:1px solid #5c686f;}
  .trow:nth-child(2){border-bottom:0;}
  .hscroll{height:1px;background:#5c686f;margin-top:3px;position:relative;}
  .hscroll i{position:absolute;left:200px;top:-2px;width:27px;height:3px;background:#00c8ff;}
  .hbtns{display:flex;gap:2px;margin-top:3px;}
  .hb{flex:1;height:16px;display:flex;align-items:center;justify-content:center;background:linear-gradient(#3a4650,#46535c);border:1px solid #5c686f;clip-path:polygon(0 0,100% 0,100% 100%,6px 100%,0 10px);}
  .hb.cut-br{clip-path:polygon(0 0,100% 0,100% 9px,calc(100% - 7px) 100%,0 100%);}

  .arrside{width:22px;margin-left:1px;margin-top:-1px;}
  .vs{display:flex;height:887px;gap:2px;margin-left:1px;}
  .vcy{width:3px;background:#00c8ff;height:886px;}
  .vstrip{--fill:linear-gradient(90deg,#39444d,#2e373f);--bd:#3f4a52;width:16px;height:886px;}
  .vstrip svg{position:absolute;left:3px;}
  .vstrip svg:first-child{top:220px;}
  .vstrip svg:last-child{top:662px;}
  .cbtn{width:20px;height:20px;background:#46525b;border:1px solid #5c686f;display:flex;align-items:center;justify-content:center;margin:3px 0 2px 1px;}

  .foot{height:131px;padding:11px 12px 0 12px;flex:none;border-bottom:1px solid #687379;}
  .bar-panel{--fill:linear-gradient(#46535c,#36414a);width:1896px;height:108px;display:flex;padding:12px 0 0 11px;}
  .g-file{width:384px;flex:none;}
  .fr1{display:flex;gap:9px;}
  .fr1 .btn{width:122px;height:33px;flex:1;}
  .fr2{display:flex;margin-top:15px;}
  .logo{width:87px;flex:none;display:flex;flex-direction:column;align-items:center;height:38px;margin-top:-4px;}
  .lname{font-family:"Open Sans","Liberation Sans",sans-serif;font-size:13.500px;font-weight:700;color:#eef1f3;line-height:14px;margin-top:1px;white-space:nowrap;}
  .lname b{color:#1d93d8;}
  .srate{--fill:linear-gradient(#39444d,#46535c);flex:1;margin-left:7px;height:33px;display:flex;align-items:center;justify-content:space-between;padding:0 10px 0 10px;font-size:13px;}
  .srate em{font-style:normal;color:#78838b;}
  .g-time{width:238px;margin-left:47px;margin-top:1px;flex:none;}
  .lcd{--fill:linear-gradient(#1d2329,#363f48);height:33px;display:flex;align-items:center;justify-content:center;color:#2fc3ef;font-family:Roboto,"Liberation Sans",sans-serif;font-size:23px;font-weight:300;}
  .dg{display:flex;align-items:center;transform:scaleX(.88);white-space:nowrap;}
  .lcd u{text-decoration:none;margin:0 2px;font-size:17px;}
  .lcd .sp{margin-left:9px;}
  .tl .dg{transform:scaleX(.74);}
  .tl u{margin:0 5px;}
  .st{display:flex;height:14px;}
  .hdd{display:flex;align-items:center;gap:1px;margin-left:20px;width:114px;font-size:10.500px;color:#78838b;white-space:nowrap;}
  .hdd em{font-style:normal;flex:none;letter-spacing:-.2px;}
  .led{width:11px;height:11px;background:#1e252b;border:1px solid #5c686f;margin:0 2px 0 1px;flex:none;}
  .led.keys{width:15px;margin:0;}
  .vol{width:87px;margin-left:23px;position:relative;height:14px;}
  .voll{position:absolute;left:0;top:7px;width:87px;height:1px;background:linear-gradient(90deg,#00c8ff 35%,#1d2429 35%);}
  .volt{position:absolute;left:30px;top:1px;width:29px;height:11px;background:#178fb0;border:1px solid #13cdf7;clip-path:polygon(4px 0,100% 0,100% 70%,calc(100% - 3px) 100%,3px 100%,0 70%,0 30%);}
  .cpurow{display:flex;gap:10px;}
  .cpu{--fill:linear-gradient(#1d2329,#363f48);width:114px;height:33px;display:flex;align-items:center;font-size:13.500px;}
  .cpu i{position:absolute;left:1px;top:1px;bottom:1px;width:20px;background:#2a6db8;}
  .cpu span{position:relative;margin-left:7px;}
  .spare{--fill:linear-gradient(#1d2329,#363f48);width:114px;height:33px;}
  .spare i{position:absolute;left:1px;right:1px;top:16px;height:1px;background:#1b2126;}
  .g-trans{width:200px;margin-left:46px;margin-top:1px;flex:none;display:grid;grid-template-columns:repeat(4,43px);column-gap:9.500px;row-gap:14px;grid-auto-rows:33px;align-items:end;}
  .tr{width:43px;height:33px;flex-direction:column;font-size:13px;}
  .tr small{font-size:9px;line-height:9px;color:#dfe4e7;}
  .lblw{position:relative;}
  label{display:block;font-size:10.500px;color:#78838b;text-align:center;transform:scale(.86,1.12);}
  .lblw label{position:absolute;left:0;right:0;top:-14px;}
  .g-tempo{width:139px;margin-left:46px;margin-top:1px;flex:none;}
  .lbls{display:grid;grid-template-columns:1fr 1fr;height:14px;line-height:14px;}
  .two{display:flex;gap:9px;}
  .two .btn{flex:1;height:33px;}
  .g-chk{width:223px;margin-left:47px;margin-top:1px;flex:none;display:grid;grid-template-columns:107px 107px;gap:7px 9px;grid-auto-rows:22px;align-content:start;}
  .ck{--fill:linear-gradient(#1f262c,#38424b);display:flex;align-items:center;font-size:13px;padding:0 6px 2px 0;}
  .ck i{width:25px;height:20px;border-right:1px solid #555f67;display:flex;align-items:center;justify-content:center;color:#6f7a82;font-size:13px;margin:2px 6px 0 0;font-family:"DejaVu Sans",sans-serif;}
  .ck.on i{color:#13cdf7;}
  .dd{justify-content:space-between;padding:0 6px 2px 11px;}
  .g-tools{width:245px;margin-left:46px;margin-top:1px;flex:none;display:grid;grid-template-columns:repeat(6,34px);column-gap:8px;row-gap:14px;grid-auto-rows:34px;}
  .tool{width:34px;height:34px;background:linear-gradient(#3f4b55,#46535c);border:1px solid #1e2429;box-shadow:inset 0 0 0 1px #4f5b63;display:flex;align-items:center;justify-content:center;}
  .tool.blue{background:radial-gradient(ellipse at 70% 55%,#3fdbe9,#2080c8);border-color:#143e5c;box-shadow:inset 0 0 0 1px #1d7ab0;}
  .tool.green{background:radial-gradient(ellipse at center,#7ee6a9,#1c9b62);border-color:#0f3b2c;box-shadow:inset 0 0 0 1px #126a45;}
  .q{font-size:23px;font-weight:400;color:#fff;}
  .off{background:#3a454e;box-shadow:none;border-color:#353f47;}
  .g-edit{width:168px;margin-left:45px;margin-top:1px;flex:none;display:grid;grid-template-columns:80px 80px;gap:6px 8px;grid-auto-rows:23px;align-content:start;}
  .g-edit .btn{height:23px;font-size:13.500px;padding-bottom:2px;}
</style>
